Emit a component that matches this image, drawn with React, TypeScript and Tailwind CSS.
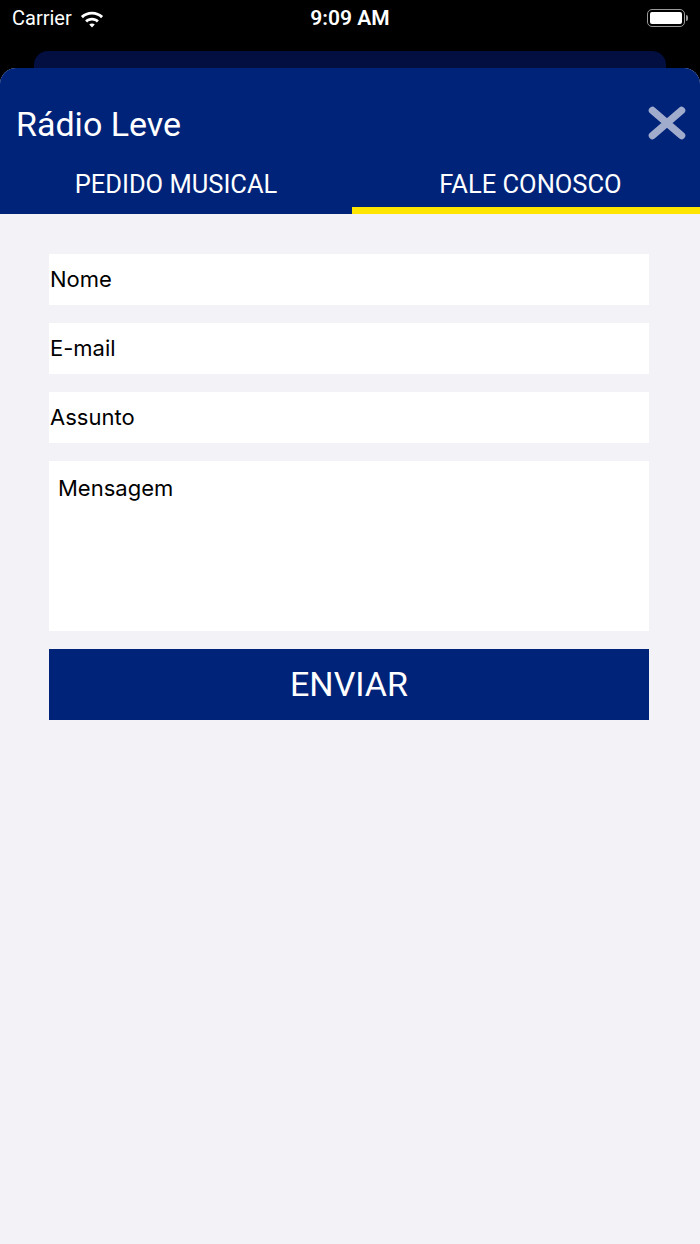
function StatusBar() {
  return (
    <div className="relative flex h-[51px] items-start justify-between bg-black px-3 pt-[5px] text-white">
      <div className="flex items-center gap-[7px] text-[20px] leading-[26px]">
        <span>Carrier</span>
        <svg width="26" height="19" viewBox="0 0 24 18" fill="white">
          <path d="M12 2.5C7.9 2.5 4.2 4.1 1.5 6.7L3.4 8.7C5.6 6.6 8.6 5.3 12 5.3S18.4 6.6 20.6 8.7L22.5 6.7C19.8 4.1 16.1 2.5 12 2.5Z" />
          <path d="M12 8.2C9.5 8.2 7.2 9.2 5.5 10.8L7.4 12.8C8.6 11.7 10.2 11 12 11S15.4 11.7 16.6 12.8L18.5 10.8C16.8 9.2 14.5 8.2 12 8.2Z" />
          <path d="M12 13.8C11 13.8 10.1 14.2 9.4 14.8L12 17.6 14.6 14.8C13.9 14.2 13 13.8 12 13.8Z" />
        </svg>
      </div>
      <span className="absolute left-1/2 top-[5px] -translate-x-1/2 text-[21px] font-semibold leading-[26px]">9:09 AM</span>
      <div className="mt-[4px] flex items-center">
        <div className="flex h-[18px] w-[38px] items-center rounded-[5px] border-[1.5px] border-[#9a9a9a] p-[2px]">
          <div className="h-full w-full rounded-[2px] bg-white" />
        </div>
        <div className="ml-[1px] h-[6px] w-[2px] rounded-r-sm bg-[#9a9a9a]" />
      </div>
    </div>
  );
}

function Field({ label }: { label: string }) {
  return (
    <div className="flex h-[51px] items-center bg-white pl-[1px] text-[22px] text-black">
      {label}
    </div>
  );
}

function CloseIcon() {
  return (
    <svg width="38" height="34" viewBox="0 0 38 34" className="mb-[4px]">
      <path d="M4.5 4.5L33.5 29.5M33.5 4.5L4.5 29.5" stroke="#a1abcc" strokeWidth="7.5" strokeLinecap="round" />
    </svg>
  );
}

export default function App() {
  return (
    <div className="flex min-h-[1244px] flex-col bg-black font-['Roboto',sans-serif]">
      <StatusBar />
      <div className="h-[17px] px-[34px]">
        <div className="h-full rounded-t-[14px] bg-[#020f40]" />
      </div>
      <div className="flex flex-1 flex-col overflow-hidden rounded-t-[16px] bg-[#f2f2f7]">
        <div className="bg-[#00237a] text-white">
          <div className="flex h-[86px] items-end justify-between pb-[10px] pl-4 pr-[14px]">
            <h1 className="text-[34px] leading-[40px]">Rádio Leve</h1>
            <CloseIcon />
          </div>
          <div className="flex">
            <div className="flex h-[60px] w-[352px] flex-col">
              <div className="flex flex-1 items-center justify-center pt-[8px] text-[25.5px]">PEDIDO MUSICAL</div>
              <div className="h-[7px]" />
            </div>
            <div className="flex h-[60px] flex-1 flex-col">
              <div className="flex flex-1 items-center justify-center pl-[9px] pt-[8px] text-[25.5px]">FALE CONOSCO</div>
              <div className="h-[7px] bg-[#ffe500]" />
            </div>
          </div>
        </div>
        <div className="flex flex-col gap-[18px] pl-[49px] pr-[51px] pt-[40px] font-['Inter',sans-serif]">
          <Field label="Nome" />
          <Field label="E-mail" />
          <Field label="Assunto" />
          <div className="h-[170px] bg-white px-[9px] pt-[11px] text-[22px] text-black">Mensagem</div>
          <button className="h-[71px] bg-[#00237a] font-['Roboto',sans-serif] text-[34px] text-white">ENVIAR</button>
        </div>
      </div>
    </div>
  );
}
